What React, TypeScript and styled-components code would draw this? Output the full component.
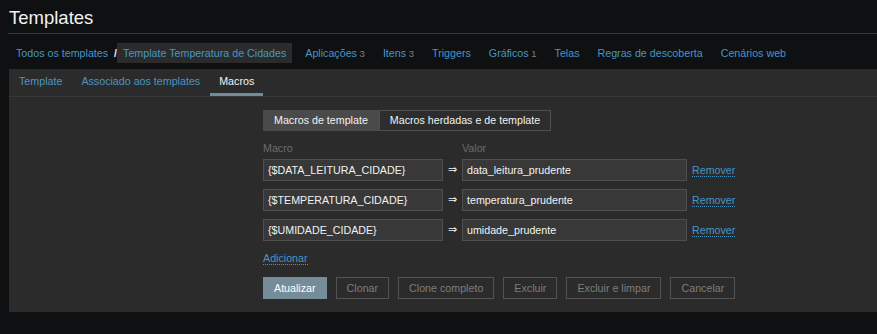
import React from "react";
import styled, { createGlobalStyle } from "styled-components";

const GlobalStyle = createGlobalStyle`
  html, body {
    margin: 0;
    padding: 0;
    background: #0e1012;
    font-family: "Liberation Sans", Arial, sans-serif;
    font-size: 10.7px;
    color: #f2f2f2;
  }
  * { box-sizing: border-box; }
`;

const Page = styled.div`
  padding-left: 9px;
  width: 877px;
  height: 334px;
  overflow: hidden;
`;

const Header = styled.header`
  height: 34px;
  padding-top: 9px;
  border-bottom: 1px solid #383838;
  margin-left: -1px;
`;

const Title = styled.h1`
  margin: 0 0 0 1px;
  font-size: 18.5px;
  line-height: 18.5px;
  font-weight: normal;
  color: #f2f2f2;
`;

const Nav = styled.nav`
  display: flex;
  align-items: center;
  height: 35px;
  padding-top: 9px;
  padding-bottom: 6px;
  margin-left: 1px;
`;

const NavItem = styled.a<{ $current?: boolean }>`
  display: inline-block;
  height: 20px;
  line-height: 20px;
  padding: 0 6px;
  margin-right: ${(p) => (p.$current ? "7px" : "6px")};
  color: #4796c4;
  text-decoration: none;
  white-space: nowrap;
  background: ${(p) => (p.$current ? "#2b2b2b" : "transparent")};
`;

const Crumb = styled(NavItem)`
  margin-right: 0;
`;

const Slash = styled.span`
  color: #f2f2f2;
  font-weight: bold;
  line-height: 20px;
`;

const Count = styled.span`
  color: #7f7f7f;
  font-size: 9.5px;
`;

const Panel = styled.section`
  background: #2b2b2b;
  width: 870px;
`;

const Tabs = styled.div`
  display: flex;
  gap: 1px;
  padding-left: 1px;
  border-bottom: 1px solid #383838;
`;

const Tab = styled.a<{ $active?: boolean }>`
  display: block;
  height: 27px;
  line-height: 24px;
  padding: 0 9px;
  border-bottom: 3px solid ${(p) => (p.$active ? "#728b9b" : "transparent")};
  color: ${(p) => (p.$active ? "#f2f2f2" : "#4796c4")};
  text-decoration: none;
  white-space: nowrap;
`;

const Body = styled.div`
  padding: 13px 0 13px 254px;
`;

const Segmented = styled.div`
  display: flex;
  height: 21px;
`;

const Segment = styled.div<{ $active?: boolean }>`
  height: 21px;
  line-height: 19px;
  padding: 0 10px;
  border: 1px solid ${(p) => (p.$active ? "#4a4a4a" : "#4f4f4f")};
  background: ${(p) => (p.$active ? "#4a4a4a" : "#2d2d2d")};
  color: #f2f2f2;
  white-space: nowrap;
`;

const MacroGrid = styled.div`
  display: grid;
  grid-template-columns: 180px 19px 225px auto;
  row-gap: 8px;
  align-items: center;
  margin-top: 8px;
`;

const ColLabel = styled.div<{ $col: number }>`
  grid-column: ${(p) => p.$col} / span 2;
  color: #6c6c6c;
  line-height: 18px;
  margin-bottom: -6px;
`;

const TextInput = styled.div`
  height: 22px;
  line-height: 20px;
  padding: 0 4px;
  border: 1px solid #4f4f4f;
  background: #383838;
  color: #f2f2f2;
  white-space: nowrap;
  overflow: hidden;
`;

const Arrow = styled.span`
  text-align: center;
  color: #f2f2f2;
  font-family: "DejaVu Sans", sans-serif;
  font-size: 11px;
  line-height: 20px;
`;

const LinkBtn = styled.a`
  justify-self: start;
  color: #4796c4;
  text-decoration: none;
  border-bottom: 1px dotted #4796c4;
  line-height: 12px;
  margin-left: 5px;
`;

const AddLink = styled(LinkBtn)`
  display: inline-block;
  margin: 11px 0 0 0;
`;

const Actions = styled.div`
  display: flex;
  gap: 9px;
  margin-top: 12px;
`;

const Button = styled.button<{ $primary?: boolean }>`
  height: 22px;
  padding: 0 10px;
  font-family: inherit;
  font-size: 10.7px;
  line-height: 20px;
  border: 1px solid ${(p) => (p.$primary ? "#768d99" : "#535353")};
  background: ${(p) => (p.$primary ? "#768d99" : "transparent")};
  color: ${(p) => (p.$primary ? "#ffffff" : "#7d7d7d")};
  border-radius: 0;
  cursor: pointer;
  white-space: nowrap;
`;

const macros = [
  { name: "{$DATA_LEITURA_CIDADE}", value: "data_leitura_prudente" },
  { name: "{$TEMPERATURA_CIDADE}", value: "temperatura_prudente" },
  { name: "{$UMIDADE_CIDADE}", value: "umidade_prudente" },
];

const navLinks: { label: string; count?: number }[] = [
  { label: "Aplicações", count: 3 },
  { label: "Itens", count: 3 },
  { label: "Triggers" },
  { label: "Gráficos", count: 1 },
  { label: "Telas" },
  { label: "Regras de descoberta" },
  { label: "Cenários web" },
];

export default function App() {
  return (
    <>
      <GlobalStyle />
      <Page>
        <Header>
          <Title>Templates</Title>
        </Header>
        <Nav>
          <Crumb href="#">Todos os templates</Crumb>
          <Slash>/</Slash>
          <NavItem $current href="#">
            Template Temperatura de Cidades
          </NavItem>
          {navLinks.map((l) => (
            <NavItem key={l.label} href="#">
              {l.label}
              {l.count !== undefined && <Count> {l.count}</Count>}
            </NavItem>
          ))}
        </Nav>
        <Panel>
          <Tabs>
            <Tab href="#">Template</Tab>
            <Tab href="#">Associado aos templates</Tab>
            <Tab $active href="#">
              Macros
            </Tab>
          </Tabs>
          <Body>
            <Segmented>
              <Segment $active>Macros de template</Segment>
              <Segment>Macros herdadas e de template</Segment>
            </Segmented>
            <MacroGrid>
              <ColLabel $col={1}>Macro</ColLabel>
              <ColLabel $col={3}>Valor</ColLabel>
              {macros.map((m) => (
                <React.Fragment key={m.name}>
                  <TextInput>{m.name}</TextInput>
                  <Arrow>⇒</Arrow>
                  <TextInput>{m.value}</TextInput>
                  <LinkBtn href="#">Remover</LinkBtn>
                </React.Fragment>
              ))}
            </MacroGrid>
            <AddLink href="#">Adicionar</AddLink>
            <Actions>
              <Button $primary>Atualizar</Button>
              <Button>Clonar</Button>
              <Button>Clone completo</Button>
              <Button>Excluir</Button>
              <Button>Excluir e limpar</Button>
              <Button>Cancelar</Button>
            </Actions>
          </Body>
        </Panel>
      </Page>
    </>
  );
}
